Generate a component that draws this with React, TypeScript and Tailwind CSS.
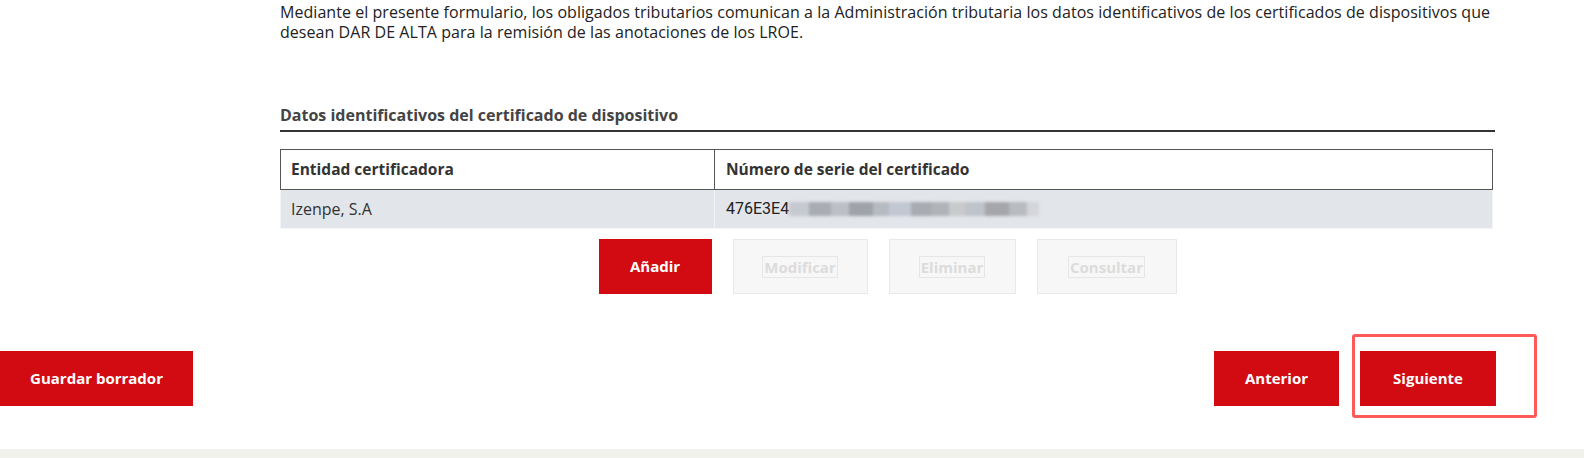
const Disabled = ({ label, w }: { label: string; w: string }) => {
  return (
    <button
      disabled
      className={`${w} h-[55px] bg-[#f7f7f7] border border-[#e9e9e9] flex items-center justify-center`}
    >
      <span className="border border-[#e6e6e6] px-[1px] leading-[20px] text-[15px] font-bold text-[#dcdcdc]">
        {label}
      </span>
    </button>
  );
};

const RedButton = ({ label, w }: { label: string; w: string }) => {
  return (
    <button
      className={`${w} h-[55px] bg-[#d20b13] text-white text-[15px] font-bold flex items-center justify-center`}
    >
      {label}
    </button>
  );
};

export default function App() {
  return (
    <div className="w-[1584px] h-[458px] bg-white flex flex-col font-['Open_Sans','Liberation_Sans',sans-serif] overflow-hidden">
      {/* Form content */}
      <div className="pl-[280px] pr-[89px]">
        <p className="pt-[2px] text-[16px] leading-[20px] tracking-[0.05px] text-[#222]">
          Mediante el presente formulario, los obligados tributarios comunican a la Administración tributaria los
          datos identificativos de los certificados de dispositivos que desean DAR DE ALTA para la remisión de las
          anotaciones de los LROE.
        </p>

        <h3 className="mt-[63px] text-[16px] leading-[20px] font-bold text-[#444] pb-[5px] border-b-2 border-[#333]">
          Datos identificativos del certificado de dispositivo
        </h3>

        <table className="mt-[17px] w-[1213px] border-collapse text-[16px] text-[#333]">
          <thead>
            <tr className="h-[40px]">
              <th className="w-[434px] border border-[#555] px-[10px] text-left text-[15.5px] font-bold">
                Entidad certificadora
              </th>
              <th className="border border-[#555] px-[11px] text-left text-[15.5px] font-bold">
                Número de serie del certificado
              </th>
            </tr>
          </thead>
          <tbody>
            <tr className="h-[39px] bg-[#e2e5e9]">
              <td className="border border-[#f3f4f6] border-t-0 px-[10px]">Izenpe, S.A</td>
              <td className="border border-[#f3f4f6] border-t-0 px-[11px]">
                <div className="flex items-center">
                  <span className="font-['Roboto',sans-serif] text-[#222]">476E3E4</span>
                  <div className="relative flex h-[14px] blur-[1.5px]">
                    <div className="w-[20px] bg-[#c5c9d0]" />
                    <div className="w-[22px] bg-[#a9acb2]" />
                    <div className="w-[18px] bg-[#bcc0c6]" />
                    <div className="w-[24px] bg-[#9fa2a8]" />
                    <div className="w-[16px] bg-[#b6bac1]" />
                    <div className="w-[22px] bg-[#c2c8d2]" />
                    <div className="w-[20px] bg-[#a8abb0]" />
                    <div className="w-[18px] bg-[#b0b3b8]" />
                    <div className="w-[16px] bg-[#c9cacc]" />
                    <div className="w-[20px] bg-[#bfc3ca]" />
                    <div className="w-[24px] bg-[#a4a6aa]" />
                    <div className="w-[18px] bg-[#b8bbbf]" />
                    <div className="w-[12px] bg-[#d4d6da]" />
                  </div>
                </div>
              </td>
            </tr>
          </tbody>
        </table>

        <div className="mt-[10px] flex justify-center gap-[21px]">
          <RedButton label="Añadir" w="w-[113px]" />
          <Disabled label="Modificar" w="w-[135px]" />
          <Disabled label="Eliminar" w="w-[127px]" />
          <Disabled label="Consultar" w="w-[140px]" />
        </div>
      </div>

      {/* Navigation */}
      <div className="mt-[57px] flex justify-between pr-[88px]">
        <RedButton label="Guardar borrador" w="w-[193px]" />
        <div className="flex gap-[21px]">
          <RedButton label="Anterior" w="w-[125px]" />
          <div className="relative">
            <RedButton label="Siguiente" w="w-[136px]" />
            <div className="absolute left-[-8px] top-[-17px] w-[185px] h-[84px] border-[3px] border-[#ff5a5a] rounded-[3px]" />
          </div>
        </div>
      </div>

      <div className="mt-auto h-[9px] bg-[#f2f2ed]" />
    </div>
  );
}
